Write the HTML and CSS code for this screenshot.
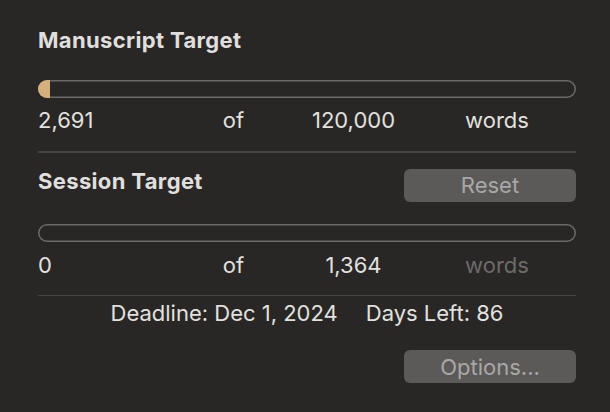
FILE: index.html
```html
<!DOCTYPE html>
<html>
<head>
<meta charset="utf-8">
<link rel="stylesheet" href="styles.css">
</head>
<body>
<div class="panel">
  <div class="title">Manuscript Target</div>
  <div class="track"><div class="fill" style="width:12px"></div></div>
  <div class="counts">
    <span class="c1">2,691</span>
    <span class="c2">of</span>
    <span class="c3">120,000</span>
    <span class="c4">words</span>
  </div>
  <div class="sep sep1"></div>
  <div class="head">
    <div class="title">Session Target</div>
    <button class="btn">Reset</button>
  </div>
  <div class="track track2"></div>
  <div class="counts counts2">
    <span class="c1">0</span>
    <span class="c2">of</span>
    <span class="c3">1,364</span>
    <span class="c4 dim">words</span>
  </div>
  <div class="sep sep2"></div>
  <div class="deadline"><span>Deadline: Dec 1, 2024</span><span>Days Left: 86</span></div>
  <div class="foot"><button class="btn">Options...</button></div>
</div>
</body>
</html>
```
FILE: styles.css
```css
html, body {
  margin: 0;
  padding: 0;
  background: #282726;
}
body {
  width: 610px;
  height: 412px;
  overflow: hidden;
  font-family: Inter, "Noto Sans", sans-serif;
  color: #e2e1df;
}
.panel {
  margin-left: 38px;
  width: 538px;
  padding-top: 28px;
}
.title {
  font-size: 22px;
  font-weight: 700;
  line-height: 24px;
  letter-spacing: 0.35px;
  color: #e0dfdd;
}
.track {
  margin-top: 28px;
  height: 18px;
  border-radius: 9px;
  overflow: hidden;
  box-shadow: inset 0 0 0 1.5px #6b6a68;
}
.track2 {
  margin-top: 22px;
}
.fill {
  height: 100%;
  background: #d5b07e;
}
.counts {
  margin-top: 10px;
  display: grid;
  grid-template-columns: 152px 87px 153px 134px;
  font-size: 22px;
  line-height: 24px;
}
.counts span { justify-self: center; }
.counts .c1 { justify-self: start; }
.counts2 { margin-top: 11px; }
.dim { color: #6c6b69; }
.sep {
  height: 1.5px;
  background: #464543;
}
.sep1 { margin-top: 19px; }
.sep2 { margin-top: 18px; }
.head {
  margin-top: 16px;
  display: flex;
  justify-content: space-between;
  align-items: flex-start;
}
.btn {
  width: 172px;
  height: 33px;
  border: none;
  border-radius: 6px;
  background: #5b5a59;
  color: #a9a8a6;
  font-family: Inter, "Noto Sans", sans-serif;
  font-size: 22px;
  padding: 0;
}
.deadline {
  margin-top: 5px;
  display: flex;
  justify-content: center;
  gap: 28px;
  font-size: 22px;
  line-height: 24px;
}
.foot {
  margin-top: 25px;
  display: flex;
  justify-content: flex-end;
}
```
